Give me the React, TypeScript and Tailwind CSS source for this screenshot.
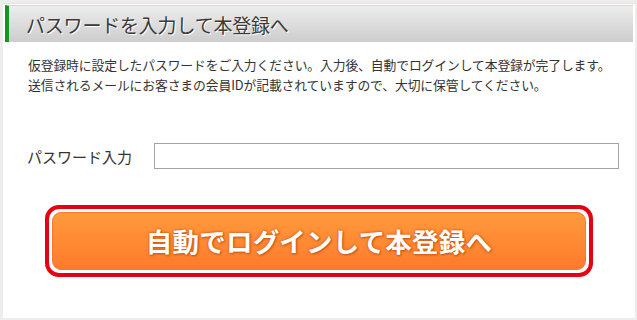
export default function App() {
  return (
    <div className="w-[637px] h-[320px] bg-[#efedec] pt-[3px] pl-[3px] pr-[2px] pb-[2px] font-['Noto_Sans_CJK_JP',sans-serif] text-[#333]">
      <div className="h-full bg-white border-t border-[#e4e4e4] px-[2px] pt-[1px]">
        <div className="h-[37px] flex items-center border-l-4 border-[#17961c] bg-gradient-to-b from-[#ededed] to-[#cdcdcd] pl-[17px] border-t border-t-[#d6d6d6]">
          <h1 className="text-[19px] leading-none tracking-[-0.2px] text-[#3a3a3a] [text-shadow:1px_1px_0_#ffffff]">
            パスワードを入力して本登録へ
          </h1>
        </div>

        <div className="mt-[13px] pl-[23px] text-[12.8px] leading-[20px] tracking-[-0.1px]">
          <p>仮登録時に設定したパスワードをご入力ください。入力後、自動でログインして本登録が完了します。</p>
          <p>送信されるメールにお客さまの会員IDが記載されていますので、大切に保管してください。</p>
        </div>

        <div className="mt-[48px] flex items-center pl-[22px]">
          <label className="w-[127px] text-[15px] leading-none">パスワード入力</label>
          <input
            type="password"
            className="w-[465px] h-[26px] border border-[#a3a3a3] outline-none px-1"
          />
        </div>

        <div className="mt-[36px] mx-auto w-[548px] h-[72px] border-4 border-[#e60012] rounded-[14px] p-[3px] bg-white">
          <button
            type="button"
            className="w-full h-full rounded-[9px] bg-gradient-to-b from-[#ff9a3c] to-[#ff7a2c] border border-[#f57a30] text-white font-bold text-[26.5px] leading-none tracking-[0.2px] [text-shadow:0_0_2px_#d8631a,0_0_3px_#d8631a,1px_1px_2px_#c45510]"
          >
            自動でログインして本登録へ
          </button>
        </div>
      </div>
    </div>
  );
}
